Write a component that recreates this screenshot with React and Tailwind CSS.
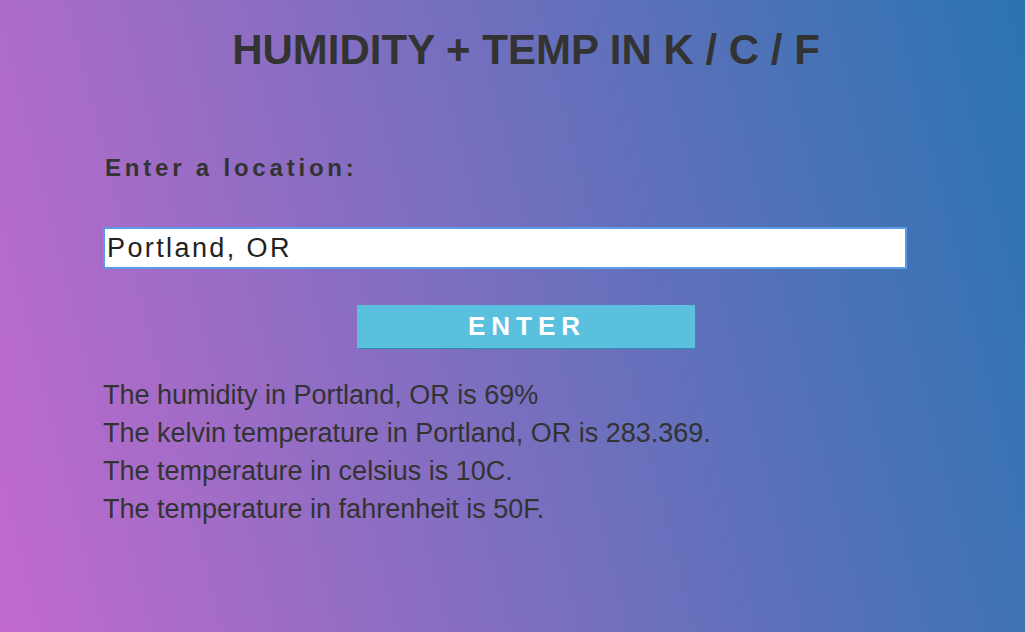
import React, { useState } from 'react'

const App = () => {
    const [location, setLocation] = useState('Portland, OR')

    return (
        <div className="min-h-[632px] w-full bg-[linear-gradient(76deg,#c16acd,#2a74b0)] font-['Liberation_Sans',Arial,sans-serif] text-[#333]">
            <div className="pl-[103px] pr-[76px] pt-[26px]">
                <h1 className="text-center text-[42px] font-bold leading-[48px] text-[#333]">
                    HUMIDITY + TEMP IN K / C / F
                </h1>
                <label className="mt-[80px] block pl-[2px] text-[24px] font-bold leading-[28px] tracking-[3.8px] text-[#333]">
                    Enter a location:
                </label>
                <input
                    value={location}
                    onChange={(e) => setLocation(e.target.value)}
                    className="mt-[45px] block h-[42px] w-[804px] border-2 border-[#5b9ae8] bg-white px-[2px] text-[27px] tracking-[2.4px] text-[#222] outline-none"
                />
                <button className="mx-auto mt-[36px] block h-[43px] w-[338px] bg-[#5bc0de] pl-[2px] text-[26px] font-bold tracking-[6px] text-white shadow-[1px_1px_0_#2f8fb0]">
                    ENTER
                </button>
                <div className="mt-[28px] text-[27px] leading-[38px] text-[#333]">
                    <p>The humidity in Portland, OR is 69%</p>
                    <p>The kelvin temperature in Portland, OR is 283.369.</p>
                    <p>The temperature in celsius is 10C.</p>
                    <p>The temperature in fahrenheit is 50F.</p>
                </div>
            </div>
        </div>
    )
}

export default App
